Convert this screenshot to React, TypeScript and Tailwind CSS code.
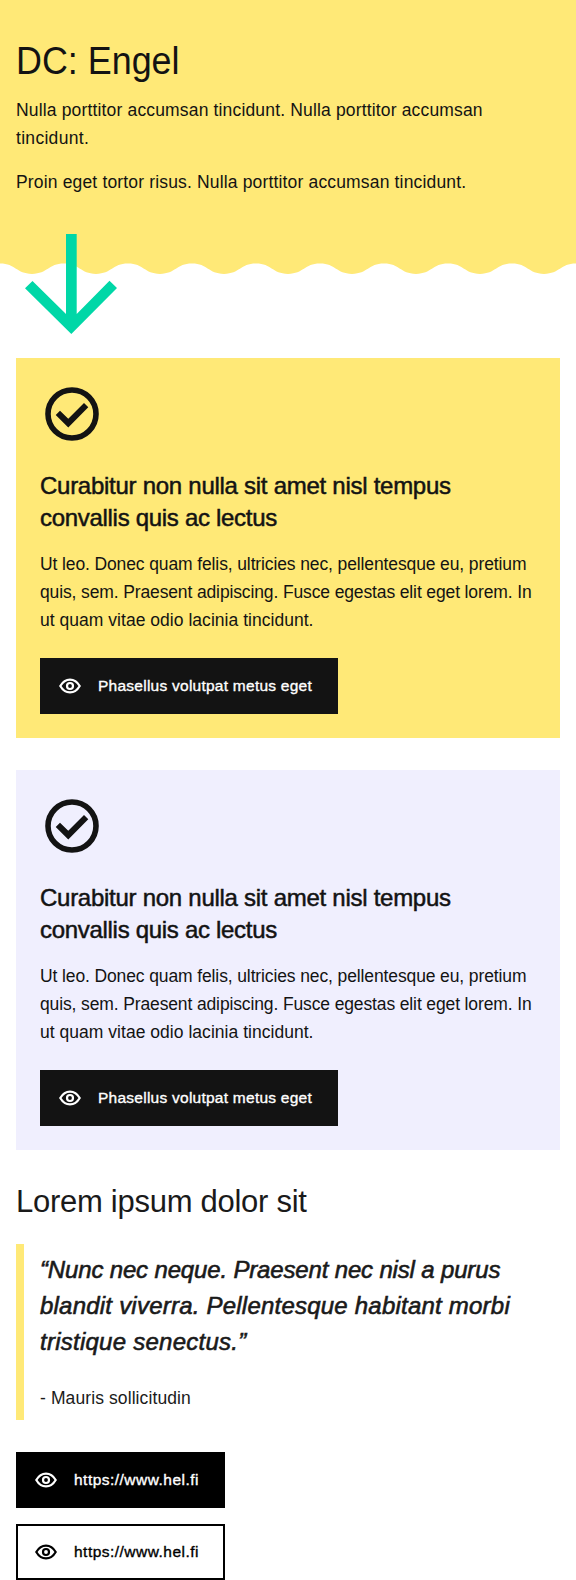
import type { ReactNode } from "react";

function EyeIcon() {
  return (
    <svg viewBox="0 0 24 24" className="block size-6 shrink-0" fill="none" stroke="currentColor" strokeWidth="2.2">
      <path d="M2.3 12C4.6 8 8 5.6 12 5.6s7.4 2.4 9.7 6.4c-2.3 4-5.7 6.4-9.7 6.4S4.6 16 2.3 12Z" />
      <circle cx="12" cy="12" r="3" />
    </svg>
  );
}

function CheckIcon() {
  return (
    <svg viewBox="0 0 24 24" className="block size-16 text-[#131313]">
      <circle cx="12" cy="12" r="9" fill="none" stroke="currentColor" strokeWidth="2.1" />
      <path d="M16.5 7.9 18.1 9.5 10.6 17.1 5.9 12.4 7.5 10.8l3.1 3Z" fill="currentColor" />
    </svg>
  );
}

function ArrowIcon() {
  return (
    <svg viewBox="0 0 96 104" className="absolute top-[232px] left-[24px] h-[104px] w-[96px]">
      <path d="M42 2h10.7v80L85.5 48.7 93 56.1 47.3 102 1 56.3 8.5 48.9 42 82Z" fill="#00d7a7" />
    </svg>
  );
}

function Wave() {
  return (
    <svg viewBox="0 0 576 11" className="block h-[11px] w-[576px]">
      <defs>
        <pattern id="wave" width="64" height="11" patternUnits="userSpaceOnUse">
          <path d="M0 0.6C16 0.6 16 10.9 32 10.9S48 0.6 64 0.6V0H0Z" fill="#ffe977" />
        </pattern>
      </defs>
      <rect width="576" height="11" fill="url(#wave)" />
    </svg>
  );
}

function Line({ children, className }: { children: ReactNode; className?: string }) {
  return <span className={`block whitespace-nowrap ${className ?? ""}`}>{children}</span>;
}

function Card({ className }: { className: string }) {
  return (
    <section className={`mx-4 px-6 pt-6 pb-6 text-[#131313] ${className}`}>
      <CheckIcon />
      <h2 className="mt-6 text-2xl leading-8 font-normal [-webkit-text-stroke:0.5px_currentColor]">
        <Line className="tracking-[-0.27px]">Curabitur non nulla sit amet nisl tempus</Line>
        <Line className="tracking-[-0.3px]">convallis quis ac lectus</Line>
      </h2>
      <p className="mt-4 text-[17.5px] leading-7">
        <Line className="tracking-[-0.12px]">Ut leo. Donec quam felis, ultricies nec, pellentesque eu, pretium</Line>
        <Line className="tracking-[-0.13px]">quis, sem. Praesent adipiscing. Fusce egestas elit eget lorem. In</Line>
        <Line className="tracking-[0.03px]">ut quam vitae odio lacinia tincidunt.</Line>
      </p>
      <a className="mt-6 flex h-14 w-[298px] items-center gap-4 bg-[#131313] pl-[18px] text-[15.5px] text-white">
        <EyeIcon />
        <span className="tracking-[0.25px] whitespace-nowrap [-webkit-text-stroke:0.35px_currentColor]">Phasellus volutpat metus eget</span>
      </a>
    </section>
  );
}

function LinkButton({ className }: { className: string }) {
  return (
    <a className={`ml-4 flex h-14 w-[209px] items-center gap-4 border-2 border-black pl-4 text-[15.5px] ${className}`}>
      <EyeIcon />
      <span className="tracking-[0.48px] whitespace-nowrap [-webkit-text-stroke:0.35px_currentColor]">https://www.hel.fi</span>
    </a>
  );
}

export default function App() {
  return (
    <main className="h-[1580px] w-[576px] overflow-hidden bg-white font-['Liberation_Sans',Arial,sans-serif] text-[#1a1a1a]">
      <header className="relative h-[358px] text-[#131313]">
        <div className="h-[263px] bg-[#ffe977] px-4 pt-9">
          <h1 className="origin-left scale-x-[0.92] text-[39px] leading-[49px] font-normal">DC: Engel</h1>
          <p className="mt-[11px] text-[17.5px] leading-7">
            <Line className="tracking-[0.16px]">Nulla porttitor accumsan tincidunt. Nulla porttitor accumsan</Line>
            <Line className="tracking-[0.3px]">tincidunt.</Line>
          </p>
          <p className="mt-4 text-[17.5px] leading-7">
            <Line className="tracking-[0.16px]">Proin eget tortor risus. Nulla porttitor accumsan tincidunt.</Line>
          </p>
        </div>
        <Wave />
        <ArrowIcon />
      </header>

      <Card className="bg-[#ffe977]" />
      <Card className="mt-8 bg-[#f0effe]" />

      <h2 className="mt-8 ml-4 text-[31px] leading-10 font-normal tracking-[-0.27px]">Lorem ipsum dolor sit</h2>

      <blockquote className="mx-4 mt-[22px] border-l-8 border-[#ffe977] py-2 pl-4">
        <p className="text-2xl leading-9 italic [-webkit-text-stroke:0.6px_currentColor]">
          <Line className="tracking-[-0.16px]">“Nunc nec neque. Praesent nec nisl a purus</Line>
          <Line className="tracking-[0.22px]">blandit viverra. Pellentesque habitant morbi</Line>
          <Line className="tracking-[0.25px]">tristique senectus.”</Line>
        </p>
        <footer className="mt-6 text-[17.5px] leading-7 tracking-[0.1px]">- Mauris sollicitudin</footer>
      </blockquote>

      <LinkButton className="mt-8 bg-black text-white" />
      <LinkButton className="mt-4 bg-white text-black" />
    </main>
  );
}
